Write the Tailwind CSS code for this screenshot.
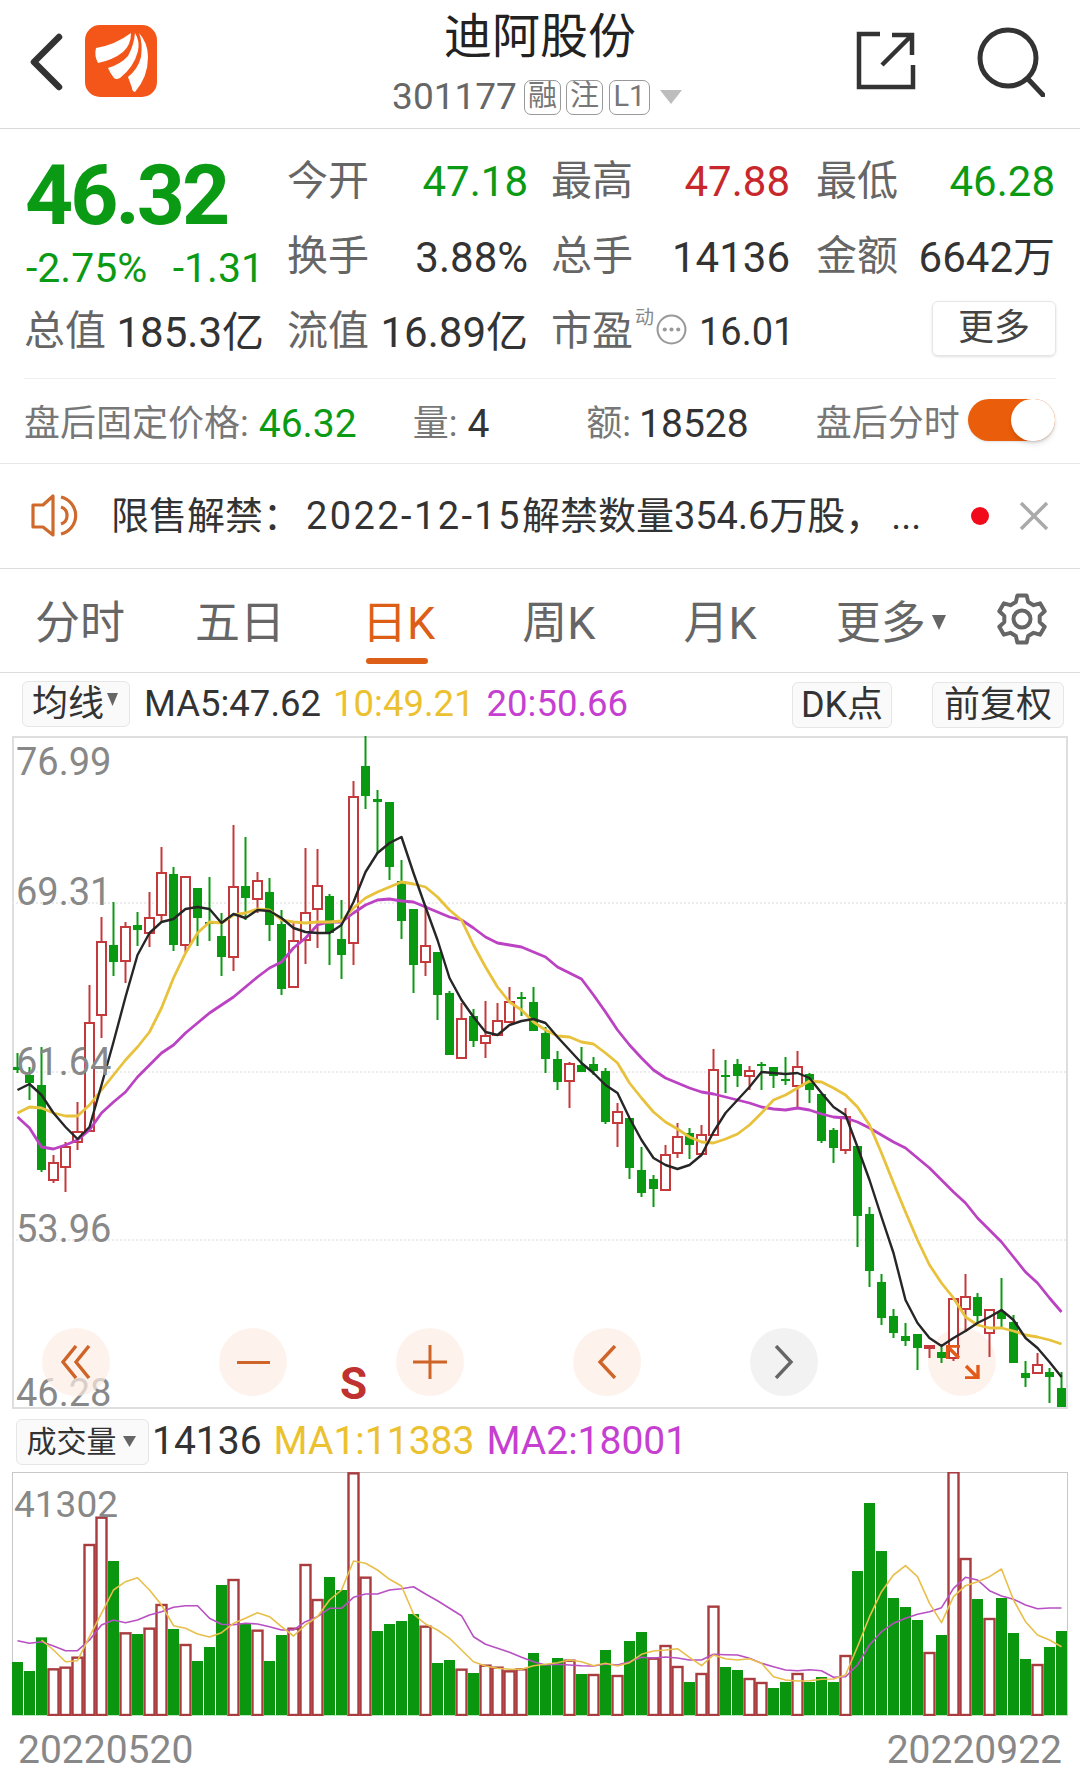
<!DOCTYPE html>
<html lang="zh-CN">
  <head>
    <meta charset="UTF-8">
    <meta name="viewport" content="width=device-width, initial-scale=1.0">
    <title>迪阿股份 301177</title>
    <script src="https://cdn.jsdelivr.net/npm/@tailwindcss/browser@4"></script>
  </head>
  <body class="bg-white font-['Roboto','Noto_Sans_CJK_SC',sans-serif] text-[#333]">
    <div class="w-[1080px] h-[1780px] overflow-hidden">

      <!-- header -->
      <header class="grid grid-cols-[270px_1fr_270px] h-[129px] border-b border-[#d9d9d9]">
        <div class="flex items-start pl-[28px] pt-[25px] gap-[21px]">
          <svg width="36" height="72" viewBox="0 0 36 72"><path d="M31 12 L6 37 L31 62" fill="none" stroke="#333" stroke-width="6.5" stroke-linecap="round" stroke-linejoin="round"/></svg>
          <svg width="72" height="72" viewBox="0 0 72 72">
            <rect width="72" height="72" rx="15" fill="#f4561a"/>
            <path d="M11 23 Q30 20 46 8 Q46 20 38 27 Q28 35 13 38 Q9 31 11 23Z" fill="#fff"/>
            <path d="M23 43 Q36 39 43 31 Q49 20 50 8 Q55 16 53 26 Q49 42 35 53 Q31 55 29 53 Q25 48 23 43Z" fill="#fff"/>
            <path d="M43 52 Q53 44 56 32 Q58 18 54 8 Q63 18 63 32 Q63 52 50 67 Q47 66 47 63 Q45 57 43 52Z" fill="#fff"/>
          </svg>
        </div>
        <div class="flex flex-col items-center pt-[9px]">
          <div class="text-[48px] leading-[56px] text-[#222]">迪阿股份</div>
          <div class="flex items-center mt-[7px] pr-[6px] text-[#666]">
            <span class="text-[37px] leading-[50px]">301177</span>
            <span class="ml-[7px] w-[37px] h-[35px] flex items-center justify-center rounded-[7px] border border-[#999] text-[29px] text-[#777]">融</span>
            <span class="ml-[5px] w-[37px] h-[35px] flex items-center justify-center rounded-[7px] border border-[#999] text-[29px] text-[#777]">注</span>
            <span class="ml-[6px] w-[41px] h-[35px] flex items-center justify-center rounded-[7px] border border-[#999] text-[29px] text-[#777]">L1</span>
            <svg class="ml-[10px]" width="22" height="14" viewBox="0 0 22 14"><path d="M0 0 H22 L11 14Z" fill="#bdbdbd"/></svg>
          </div>
        </div>
        <div class="flex items-start justify-end pr-[35px] pt-[27px] gap-[61px]">
          <svg width="60" height="64" viewBox="0 0 60 64"><path d="M24 7 H3 V60 H57 V38 M26 38 L56 8 M36 8 H56 V28" fill="none" stroke="#333" stroke-width="4.5"/></svg>
          <svg width="68" height="70" viewBox="0 0 68 70"><ellipse cx="31" cy="31" rx="28" ry="28" fill="none" stroke="#333" stroke-width="5"/><path d="M51 52 L66 68" stroke="#333" stroke-width="5" stroke-linecap="round"/></svg>
        </div>
      </header>

      <!-- quote -->
      <section class="mx-[24px] h-[250px] pt-[15px] border-b border-[#eee] grid grid-cols-[263px_264px_265px_240px] grid-rows-[75px_76px_74px] text-[42px]">
        <div class="row-span-2 flex flex-col text-[#0b9a14]">
          <div class="h-[103px] pl-[1px] flex items-center text-[84px] font-bold tracking-[-3px]">46.32</div>
          <div class="h-[44px] w-[240px] pl-[2px] flex items-center justify-between text-[41px]"><span>-2.75%</span><span>-1.31</span></div>
        </div>
        <div class="w-[241px] flex items-center justify-between"><span class="text-[41px] text-[#666]">今开</span><span class="text-[#0b9a14]">47.18</span></div>
        <div class="w-[239px] flex items-center justify-between"><span class="text-[41px] text-[#666]">最高</span><span class="text-[#c8282c]">47.88</span></div>
        <div class="w-[239px] flex items-center justify-between"><span class="text-[41px] text-[#666]">最低</span><span class="text-[#0b9a14]">46.28</span></div>
        <div class="w-[241px] flex items-center justify-between"><span class="text-[41px] text-[#666]">换手</span><span>3.88%</span></div>
        <div class="w-[239px] flex items-center justify-between"><span class="text-[41px] text-[#666]">总手</span><span>14136</span></div>
        <div class="w-[239px] flex items-center justify-between"><span class="text-[41px] text-[#666]">金额</span><span>6642万</span></div>
        <div class="w-[240px] flex items-center justify-between"><span class="text-[41px] text-[#666]">总值</span><span>185.3亿</span></div>
        <div class="w-[241px] flex items-center justify-between"><span class="text-[41px] text-[#666]">流值</span><span>16.89亿</span></div>
        <div class="flex items-center">
          <span class="text-[41px] text-[#666]">市盈</span>
          <span class="text-[19px] leading-none text-[#888] mb-[30px] ml-[2px]">动</span>
          <svg class="ml-[2px] mb-[6px]" width="31" height="31" viewBox="0 0 30 30"><circle cx="15" cy="15" r="13.5" fill="none" stroke="#999" stroke-width="2"/><circle cx="8.5" cy="15" r="2" fill="#999"/><circle cx="15" cy="15" r="2" fill="#999"/><circle cx="21.5" cy="15" r="2" fill="#999"/></svg>
          <span class="ml-[12px] text-[38px]">16.01</span>
        </div>
        <div class="flex items-center justify-end">
          <div class="w-[124px] h-[55px] mb-[8px] flex items-center justify-center rounded-[6px] border border-[#e6e6e6] shadow-sm text-[36px] text-[#444]">更多</div>
        </div>
      </section>

      <!-- after hours -->
      <section class="h-[85px] border-b border-[#e8e8e8] flex items-center text-[36px] pt-[6px]">
        <span class="ml-[24px] text-[#777]">盘后固定价格:</span>
        <span class="ml-[10px] text-[39px] text-[#0b9a14]">46.32</span>
        <span class="ml-[56px] text-[#777]">量:</span>
        <span class="ml-[10px] text-[39px]">4</span>
        <span class="ml-[97px] text-[#777]">额:</span>
        <span class="ml-[8px] text-[39px]">18528</span>
        <span class="ml-[67px] text-[#777]">盘后分时</span>
        <div class="ml-[8px] w-[87px] h-[42px] mb-[8px] rounded-full bg-[#ea5d0a] flex justify-end shadow-sm">
          <div class="w-[44px] h-[42px] rounded-full bg-white shadow-md"></div>
        </div>
      </section>

      <!-- notice -->
      <section class="h-[105px] border-b border-[#ddd] flex items-center">
        <svg class="ml-[30px]" width="50" height="44" viewBox="0 0 50 44" fill="none" stroke="#cf6a2c" stroke-width="3.2" stroke-linejoin="round"><path d="M3 11 H13 L23 2 V41 L13 33 H3Z"/><path d="M31 3 A19 19 0 0 1 31 40"/><path d="M31 13 A9 9 0 0 1 31 30"/></svg>
        <div class="ml-[31px] w-[816px] text-[38px] text-[#333] whitespace-nowrap">限售解禁：<span class="ml-[5px] tracking-[2.4px]">2022-12-15</span>解禁数量354.6万股，<span class="ml-[8px]">...</span></div>
        <div class="ml-[44px] w-[18px] h-[18px] rounded-full bg-[#f00a1a]"></div>
        <svg class="ml-[30px]" width="30" height="28" viewBox="0 0 30 28"><path d="M2 1 L28 27 M28 1 L2 27" stroke="#aaa" stroke-width="3.5"/></svg>
      </section>

      <!-- tabs -->
      <nav class="h-[104px] border-b border-[#ddd] flex items-center text-[45px] text-[#666] pt-[6px]">
        <span class="ml-[35px]">分时</span>
        <span class="ml-[70px]">五日</span>
        <span class="relative ml-[77px] text-[#dd5f17]">日K<span class="absolute left-[4px] top-[68px] w-[62px] h-[6px] rounded-full bg-[#dd5f17]"></span></span>
        <span class="ml-[87px]">周K</span>
        <span class="ml-[88px]">月K</span>
        <span class="ml-[79px]">更多</span>
        <svg class="ml-[6px] mb-[2px]" width="14" height="15" viewBox="0 0 15 16"><path d="M0 0 H15 L7.5 16Z" fill="#666"/></svg>
        <svg class="ml-[50px] mt-[-10px]" width="52" height="52" viewBox="0 0 52 52" fill="none" stroke="#666" stroke-width="4" stroke-linejoin="round"><path d="M21.4 2.4 H30.6 L32.2 9.1 L37.6 12.2 L44.1 10.3 L48.7 18.2 L43.7 22.9 V29.1 L48.7 33.8 L44.1 41.7 L37.6 39.8 L32.2 42.9 L30.6 49.6 H21.4 L19.8 42.9 L14.4 39.8 L7.9 41.7 L3.3 33.8 L8.3 29.1 V22.9 L3.3 18.2 L7.9 10.3 L14.4 12.2 L19.8 9.1Z"/><circle cx="26" cy="26" r="8.5"/></svg>
      </nav>

      <!-- MA row -->
      <div class="h-[63px] flex items-center text-[36.5px]">
        <div class="ml-[22px] w-[108px] h-[46px] mb-[2px] flex items-center justify-center gap-[3px] rounded-[6px] border border-[#e6e6e6] bg-[#fafafa] text-[36px] text-[#333] pr-[2px]">均线<svg width="11" height="13" viewBox="0 0 11 13" class="mb-[8px]"><path d="M0 0 H11 L5.5 13Z" fill="#666"/></svg></div>
        <span class="ml-[14px] text-[#333]">MA5:47.62</span>
        <span class="ml-[12px] text-[#ecc12f]">10:49.21</span>
        <span class="ml-[12px] text-[#c53fd0]">20:50.66</span>
        <div class="ml-auto w-[100px] h-[46px] flex items-center justify-center rounded-[6px] border border-[#e6e6e6] bg-[#fafafa] text-[36px] text-[#333]">DK点</div>
        <div class="ml-[40px] mr-[16px] w-[132px] h-[46px] flex items-center justify-center rounded-[6px] border border-[#e6e6e6] bg-[#fafafa] text-[36px] text-[#333]">前复权</div>
      </div>

      <!-- price chart -->
      <div class="relative ml-[12px] w-[1056px] h-[673px] border-2 border-[#dedede]">
        <div class="absolute left-[914px] top-[590px] w-[68px] h-[68px] rounded-full bg-[#fdece4]/70"></div>
        <svg id="price" class="absolute -left-[2px] -top-[2px]" width="1056" height="673" viewBox="12 736 1056 673"></svg>
        <span class="absolute left-[2px] top-[1px] text-[38px] leading-[46px] text-[#888]">76.99</span>
        <span class="absolute left-[2px] top-[131px] text-[38px] leading-[46px] text-[#888]">69.31</span>
        <span class="absolute left-[2px] top-[301px] text-[38px] leading-[46px] text-[#888]">61.64</span>
        <span class="absolute left-[2px] top-[468px] text-[38px] leading-[46px] text-[#888]">53.96</span>
        <span class="absolute left-[2px] top-[632px] text-[38px] leading-[46px] text-[#888]">46.28</span>

        <div class="absolute left-[28px] top-[590px] w-[68px] h-[68px] rounded-full bg-[#fdece4]/70 flex items-center justify-center">
          <svg width="30" height="34" viewBox="0 0 30 34" fill="none" stroke="#cf6428" stroke-width="3.4"><path d="M15 1 L2 17 L15 33 M28 1 L15 17 L28 33"/></svg>
        </div>
        <div class="absolute left-[205px] top-[590px] w-[68px] h-[68px] rounded-full bg-[#fdece4]/70 flex items-center justify-center">
          <div class="w-[33px] h-[3px] bg-[#cf6428]"></div>
        </div>
        <div class="absolute left-[382px] top-[590px] w-[68px] h-[68px] rounded-full bg-[#fdece4]/70 flex items-center justify-center">
          <svg width="34" height="34" viewBox="0 0 34 34"><path d="M0 17 H34 M17 0 V34" stroke="#cf6428" stroke-width="3"/></svg>
        </div>
        <div class="absolute left-[559px] top-[590px] w-[68px] h-[68px] rounded-full bg-[#fdece4]/70 flex items-center justify-center">
          <svg width="20" height="34" viewBox="0 0 20 34" fill="none" stroke="#cf6428" stroke-width="3.4"><path d="M18 1 L3 17 L18 33"/></svg>
        </div>
        <div class="absolute left-[736px] top-[590px] w-[68px] h-[68px] rounded-full bg-[#f2f2f2] flex items-center justify-center">
          <svg width="20" height="34" viewBox="0 0 20 34" fill="none" stroke="#666" stroke-width="3.4"><path d="M2 1 L17 17 L2 33"/></svg>
        </div>
        <svg class="absolute left-[932px] top-[607px]" width="34" height="34" viewBox="0 0 34 34" fill="none" stroke="#e2591b" stroke-width="3.4"><path d="M1 14 V1 H14 M1 1 L13 13 M32 20 V33 H19 M32 33 L20 21"/></svg>
        <span class="absolute left-[326px] top-[621px] text-[44px] leading-[50px] font-bold text-[#c0322f]">S</span>
      </div>

      <!-- volume row -->
      <div class="h-[63px] flex items-center text-[39px] pt-[2px]">
        <div class="ml-[16px] w-[133px] h-[46px] pr-[3px] flex items-center justify-center gap-[6px] rounded-[6px] border border-[#e6e6e6] bg-[#fafafa] text-[30px] text-[#333]">成交量<svg width="13" height="11" viewBox="0 0 13 11"><path d="M0 0 H13 L6.5 11Z" fill="#666"/></svg></div>
        <span class="ml-[3px] text-[#333]">14136</span>
        <span class="ml-[12px] text-[#ecc12f]">MA1:11383</span>
        <span class="ml-[12px] text-[#c53fd0]">MA2:18001</span>
      </div>

      <!-- volume chart -->
      <div class="relative ml-[12px] w-[1056px] h-[244px] border-t border-l border-r border-[#c8c8c8] border-b border-b-[#b9e5ba]">
        <svg id="volume" class="absolute -left-[1px] -top-[1px]" width="1056" height="244" viewBox="12 1472 1056 244"></svg>
        <span class="absolute left-[1px] top-[9px] text-[37px] leading-[46px] text-[#888]">41302</span>
      </div>
      <div class="flex justify-between pl-[18px] pr-[18px] mt-[11px] text-[39px] leading-[46px] text-[#888]">
        <span>20220520</span>
        <span>20220922</span>
      </div>
    </div>

    <script>
    // candles: [kind, bodyTop, bodyBottom, wickHigh, wickLow], y in page pixels
    const candles = [
      ['g',1067,1070,1053,1073],['g',1075,1083,1067,1100],['g',1085,1170,1047,1172],['r',1163,1180,1155,1183],
      ['r',1147,1167,1142,1192],['r',1132,1142,1102,1150],['r',1023,1131,985,1131],['r',942,1015,917,1038],
      ['g',945,962,902,976],['r',927,961,922,983],['g',925,930,912,946],['r',918,933,892,947],
      ['r',873,915,847,923],['g',874,945,867,951],['r',877,945,877,952],['g',888,918,888,946],
      ['g',922,924,877,941],['g',936,957,913,976],['r',887,957,825,971],['g',886,898,837,920],
      ['r',881,899,872,913],['g',892,925,878,941],['g',924,989,910,995],['r',941,987,922,987],
      ['r',913,940,848,964],['r',886,909,849,948],['g',896,933,894,965],['g',939,955,900,979],
      ['r',797,943,781,965],['g',766,796,736,809],['g',799,802,790,853],['g',802,867,802,880],
      ['g',881,921,860,939],['g',909,965,909,993],['r',946,962,905,976],['g',952,995,952,1020],
      ['g',993,1055,991,1055],['r',1019,1058,1003,1058],['g',1016,1041,1009,1047],['r',1036,1043,1001,1058],
      ['r',1021,1035,1003,1035],['r',1002,1022,987,1022],['g',997,999,992,1016],['g',1002,1031,987,1031],
      ['g',1033,1059,1027,1073],['g',1059,1082,1051,1090],['r',1064,1081,1062,1108],['g',1065,1072,1047,1072],
      ['g',1064,1071,1057,1075],['g',1071,1122,1068,1124],['r',1112,1123,1103,1147],['g',1118,1168,1118,1179],
      ['g',1170,1193,1147,1197],['g',1179,1189,1175,1207],['r',1155,1190,1145,1190],['r',1137,1153,1123,1158],
      ['g',1133,1145,1128,1159],['r',1135,1154,1125,1154],['r',1070,1135,1049,1135],['g',1075,1077,1060,1093],
      ['g',1064,1076,1059,1087],['r',1071,1076,1066,1090],['g',1064,1066,1062,1090],['g',1067,1076,1067,1088],
      ['g',1079,1081,1057,1085],['r',1067,1086,1051,1107],['g',1074,1090,1073,1103],['g',1094,1141,1094,1143],
      ['g',1130,1148,1128,1163],['r',1117,1150,1108,1154],['g',1146,1216,1146,1247],['g',1214,1271,1207,1287],
      ['g',1282,1318,1274,1325],['g',1316,1333,1309,1338],['g',1336,1341,1323,1346],['g',1334,1348,1334,1370],
      ['r',1346,1348,1346,1358],['g',1352,1358,1347,1363],['r',1299,1358,1299,1361],['r',1297,1309,1274,1332],
      ['g',1297,1316,1293,1325],['r',1310,1333,1310,1357],['g',1312,1319,1278,1327],['g',1322,1363,1315,1363],
      ['g',1373,1378,1361,1387],['r',1365,1373,1353,1373],['g',1372,1377,1368,1403],['g',1388,1407,1372,1407],
    ];
    const ma5 = [1090,1084,1095,1113,1127,1139,1127,1085,1042,997,955,933,922,919,909,907,909,923,914,918,910,911,918,928,932,933,933,925,902,872,853,843,837,873,907,940,978,1000,1017,1032,1035,1025,1021,1019,1023,1037,1050,1063,1073,1085,1093,1118,1140,1158,1165,1169,1165,1155,1132,1113,1100,1087,1072,1073,1074,1073,1078,1093,1107,1115,1147,1180,1217,1253,1300,1323,1338,1346,1338,1331,1323,1317,1310,1320,1338,1348,1362,1377];
    const ma10 = [1113,1107,1108,1113,1116,1116,1105,1090,1075,1060,1047,1032,1008,978,953,933,922,923,915,913,909,910,920,922,923,922,922,921,908,898,892,887,882,884,887,897,910,920,945,967,987,1002,1010,1022,1030,1036,1037,1042,1044,1053,1063,1083,1098,1112,1122,1129,1137,1142,1143,1139,1134,1125,1113,1100,1095,1088,1081,1082,1088,1095,1107,1125,1153,1183,1212,1240,1265,1283,1298,1317,1325,1328,1328,1331,1335,1337,1340,1344];
    const ma20 = [1117,1128,1147,1149,1145,1140,1130,1113,1102,1092,1077,1065,1053,1045,1033,1023,1013,1005,997,987,977,968,962,948,938,925,922,922,913,905,900,899,901,902,907,912,917,920,928,937,943,945,947,952,957,967,973,979,995,1012,1030,1045,1058,1070,1078,1083,1088,1092,1094,1097,1100,1103,1107,1109,1110,1108,1110,1114,1117,1118,1122,1128,1135,1142,1148,1158,1168,1180,1192,1203,1218,1230,1242,1257,1272,1283,1298,1312];

    // volume: [kind, top], tops and lines as read off the 3x crop, y = 1420 + v / 3
    const volume = ['g726','g753','g652','r748','r743','r713','r375','r293','g423','r640','g642','r626','r555','g627','r675','g723','g681','g495','r480','g610','r632','g723','g645','r626','r435','r540','g471','g510','r160','r473','g633','g612','g603','g582','r620','g729','g720','r749','g759','r737','r743','r754','r748','g699','g733','g714','r722','g762','r765','g690','r768','g663','g636','r716','r678','r741','g786','r762','r560','g741','g750','r777','r789','g804','g786','r762','g786','g771','g786','r708','g453','g249','g393','g534','g561','g600','r699','g645','r157','r417','g537','r597','g534','g639','g717','r735','g681','g633'];
    const volMa1 = [null,null,660,690,725,722,650,580,510,485,473,510,555,617,625,642,651,638,610,595,578,590,620,648,615,590,540,510,423,430,450,478,498,582,612,630,655,690,725,738,745,748,748,737,733,728,720,725,737,730,738,728,703,693,690,686,712,737,705,716,720,716,730,770,780,783,782,778,777,765,680,590,515,465,437,470,550,608,530,497,485,470,447,540,605,645,660,680];
    const volMa2 = [662,670,665,678,692,692,660,615,600,608,600,585,575,562,557,557,595,613,614,610,612,620,630,630,605,590,565,565,532,522,522,510,506,500,522,542,565,587,650,673,685,697,712,725,735,733,735,737,738,732,735,725,712,714,711,714,720,720,703,704,705,715,730,740,750,752,749,752,772,770,735,675,635,610,595,583,575,563,505,472,480,512,528,538,555,566,564,564];

    const xAt = i => 17.5 + 12 * i;
    const line = (vals, color, width, toY = v => v) => {
      const pts = vals.map((v, i) => v === null ? null : xAt(i) + ',' + toY(v).toFixed(1)).filter(Boolean).join(' ');
      return `<polyline points="${pts}" fill="none" stroke="${color}" stroke-width="${width}" stroke-linejoin="round"/>`;
    };

    let price = '';
    [903, 1072, 1240].forEach(y => {
      price += `<line x1="12" x2="1066" y1="${y}" y2="${y}" stroke="#e6e6e6" stroke-width="1.5" stroke-dasharray="2 2"/>`;
    });
    candles.forEach(([kind, top, bottom, high, low], i) => {
      const x = xAt(i);
      const color = kind === 'r' ? '#c43a3c' : '#0a9a12';
      price += `<line x1="${x}" x2="${x}" y1="${high}" y2="${low}" stroke="${color}" stroke-width="2"/>`;
      if (kind === 'r') {
        price += `<rect x="${x - 4.5}" y="${top}" width="9" height="${bottom - top}" fill="#fff" stroke="${color}" stroke-width="2"/>`;
      } else {
        price += `<rect x="${x - 4.5}" y="${top}" width="9" height="${bottom - top}" fill="${color}"/>`;
      }
    });
    price += line(ma20, '#bb42c2', 2.8) + line(ma10, '#e8c23c', 2.8) + line(ma5, '#262626', 2.4);
    document.getElementById('price').innerHTML = price;

    const volY = v => 1420 + v / 3;
    let vol = '';
    volume.forEach((bar, i) => {
      const top = volY(Number(bar.slice(1)));
      if (bar[0] === 'r') {
        vol += `<rect x="${xAt(i) - 5}" y="${top}" width="10" height="${1715 - top}" fill="#fff" stroke="#a83c3f" stroke-width="2.4"/>`;
      } else {
        vol += `<rect x="${xAt(i) - 5.5}" y="${top}" width="11" height="${1715 - top}" fill="#0a960f"/>`;
      }
    });
    vol += line(volMa2, '#b84fc2', 1.6, volY) + line(volMa1, '#e8bf4a', 1.6, volY);
    document.getElementById('volume').innerHTML = vol;
    </script>
  </body>
</html>
